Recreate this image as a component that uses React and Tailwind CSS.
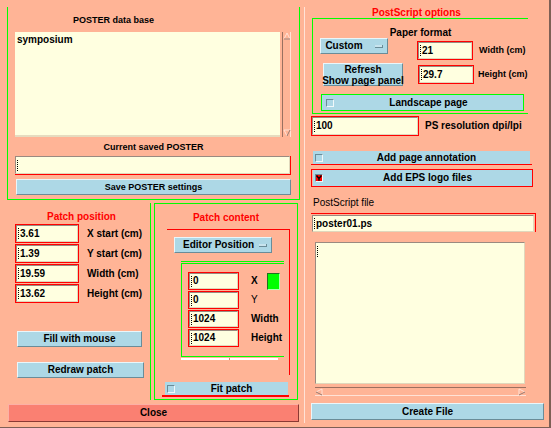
import React from 'react';

// small dotted insertion cursor shown in Tk entries
function Cursor() {
  return <span className="inline-block w-px h-[11px] border-l border-dotted border-black mr-px" />;
}

function Entry({ value, className = '' }) {
  return (
    <div className={`flex bg-[#ffffe0] border border-[#ff0000] ${className}`}>
      <div className="flex flex-1 items-center pl-px border border-t-[#9a8a80] border-l-[#9a8a80] border-b-[#e0d8bc] border-r-[#e0d8bc]">
        <Cursor />
        <span>{value}</span>
      </div>
    </div>
  );
}

function Btn({ children, className = '' }) {
  return (
    <div
      className={`flex items-center justify-center bg-[#add8e6] border border-t-[#eaf6fa] border-l-[#eaf6fa] border-b-[#6a8c98] border-r-[#6a8c98] ${className}`}
    >
      {children}
    </div>
  );
}

function Check({ on = false }) {
  return (
    <span
      className={`flex items-center justify-center w-[8px] h-[8px] border border-t-[#6a8c98] border-l-[#6a8c98] border-b-[#f0f8fa] border-r-[#f0f8fa] ${on ? 'bg-[#ff0000]' : 'bg-[#add8e6]'}`}
    >
      {on && (
        <svg width="6" height="6" viewBox="0 0 6 6">
          <path d="M0.5 0.5 L3 3.5 L5.5 0.5 M3 3.5 V5.8" stroke="#000" strokeWidth="1.4" fill="none" />
        </svg>
      )}
    </span>
  );
}

function MenuMark() {
  return <span className="block w-[8px] h-[3px] bg-[#c8e4ee] border-b border-r border-[#6a8c98]" />;
}

function VScroll() {
  return (
    <div className="w-[9px] h-[105px] flex flex-col justify-between border-l border-l-[#9a7060] border-r border-r-[#ffe2d6]">
      <svg width="8" height="8" viewBox="0 0 8 8">
        <path d="M4 1 L7 7 L1 7 Z" fill="none" stroke="#ffe2d6" />
        <path d="M1 7 H7" stroke="#9a7060" />
      </svg>
      <svg width="8" height="8" viewBox="0 0 8 8">
        <path d="M1 1 H7 L4 7 Z" fill="none" stroke="#ffe2d6" />
        <path d="M4 7 L7 1" stroke="#9a7060" />
      </svg>
    </div>
  );
}

function HScroll() {
  return (
    <div className="w-[211px] h-[9px] flex justify-between border-t border-t-[#9a7060] border-b border-b-[#ffe2d6]">
      <svg width="8" height="8" viewBox="0 0 8 8">
        <path d="M1 4 L7 1 L7 7 Z" fill="none" stroke="#ffe2d6" />
        <path d="M1 4 L7 7" stroke="#9a7060" />
      </svg>
      <svg width="8" height="8" viewBox="0 0 8 8">
        <path d="M7 4 L1 1 L1 7 Z" fill="none" stroke="#ffe2d6" />
        <path d="M1 7 L7 4" stroke="#9a7060" />
      </svg>
    </div>
  );
}

function PosterBase() {
  return (
    <div className="ml-[7px] mt-[7px] w-[293px] h-[193px] flex flex-col border-x border-b border-[#00ff00]">
      <div className="mt-[8px] ml-[65px] h-[11px] leading-[11px] text-[9px]">POSTER data base</div>
      <div className="mt-[6px] ml-[7px] flex gap-[2px]">
        <div className="w-[265px] h-[105px] bg-[#ffffe0] border-b-2 border-[#e6dcc0] pl-[2px] pt-[2px] leading-[11px]">
          symposium
        </div>
        <VScroll />
      </div>
      <div className="mt-[5px] h-[11px] leading-[11px] text-center text-[9px]">Current saved POSTER</div>
      <div className="mt-[3px] ml-[7px] w-[276px] h-[19px] flex bg-[#ffffe0] border-b border-r border-[#ff0000]">
        <div className="flex flex-1 items-center pl-px border border-t-[#9a8a80] border-l-[#9a8a80] border-b-[#e0d8bc] border-r-[#e0d8bc]">
          <Cursor />
        </div>
      </div>
      <Btn className="mt-[4px] ml-[8px] w-[275px] h-[16px] text-[9px]">Save POSTER settings</Btn>
    </div>
  );
}

function PatchPosition() {
  const rows = [
    ['3.61', 'X start (cm)'],
    ['1.39', 'Y start (cm)'],
    ['19.59', 'Width (cm)'],
    ['13.62', 'Height (cm)'],
  ];
  return (
    <div className="w-[150px] flex flex-col">
      <div className="mt-[11px] ml-[47px] h-[11px] leading-[11px] text-[#ff0000]">Patch position</div>
      <div className="mt-[2px] flex flex-col gap-px">
        {rows.map(([v, l]) => (
          <div key={l} className="flex items-center">
            <Entry value={v} className="ml-[15px] w-[64px] h-[19px]" />
            <span className="ml-[8px]">{l}</span>
          </div>
        ))}
      </div>
      <Btn className="mt-[28px] ml-[17px] w-[125px] h-[16px]">Fill with mouse</Btn>
      <Btn className="mt-[15px] ml-[17px] w-[127px] h-[16px]">Redraw patch</Btn>
    </div>
  );
}

function PatchContent() {
  const rows = [
    ['0', 'X'],
    ['0', 'Y'],
    ['1024', 'Width'],
    ['1024', 'Height'],
  ];
  return (
    <div className="mt-[3px] ml-[3px] w-[144px] h-[197px] flex flex-col border border-[#00ff00]">
      <div className="mt-[8px] h-[11px] leading-[11px] text-center text-[#ff0000]">Patch content</div>
      <div className="mt-[6px] ml-[12px] w-[123px] h-[146px] flex flex-col border-t border-r border-[#ff0000]">
        <Btn className="mt-[7px] ml-[7px] w-[98px] h-[16px] justify-start">
          <span className="ml-[8px]">Editor Position</span>
          <span className="ml-[5px]">
            <MenuMark />
          </span>
        </Btn>
        <div className="mt-[8px] ml-[14px] w-[103px] flex flex-col">
          <div className="h-[3px] border-y border-[#00ff00]" />
          <div className="h-[93px] border-l border-b border-[#00ff00] flex flex-col pt-[8px] gap-px">
            {rows.map(([v, l], i) => (
              <div key={l} className="flex items-center">
                <Entry value={v} className="ml-[6px] w-[51px] h-[18px]" />
                <span className={`ml-[12px] w-[16px] ${l === 'Y' ? 'font-normal' : ''}`}>{l}</span>
                {i === 0 && (
                  <span className="w-[13px] h-[17px] bg-[#00ff00] border border-t-[#207020] border-l-[#207020] border-b-[#b0ffb0] border-r-[#b0ffb0]" />
                )}
              </div>
            ))}
          </div>
          <div className="mt-px w-[97px] h-[2px] bg-[#ffffff] flex justify-center">
            <span className="w-px h-[2px] bg-[#c09080]" />
          </div>
        </div>
      </div>
      <div className="mt-[7px] ml-[7px] w-[127px] border-b-2 border-[#ff0000]">
        <div className="ml-[3px] w-[123px] h-[13px] bg-[#add8e6] flex items-center">
          <span className="ml-[2px]">
            <Check />
          </span>
          <span className="flex-1 text-center">Fit patch</span>
        </div>
      </div>
    </div>
  );
}

function LeftColumn() {
  return (
    <div className="w-[304px] flex flex-col">
      <PosterBase />
      <div className="flex h-[200px]">
        <PatchPosition />
        <div className="mt-[3px] w-px h-[197px] bg-[#00ff00]" />
        <PatchContent />
      </div>
      <div className="mt-[4px] ml-[8px] w-[291px] h-[18px] flex items-center justify-center bg-[#fa8072] border border-t-[#fcb0a6] border-l-[#fcb0a6] border-b-[#8a3a34] border-r-[#8a3a34]">
        Close
      </div>
    </div>
  );
}

function RightColumn() {
  return (
    <div className="w-[244px] flex flex-col">
      <div className="mt-[7px] ml-[67px] h-[11px] leading-[11px] text-[#ff0000]">PostScript options</div>
      <div className="ml-[7px] w-[216px] h-[96px] flex flex-col overflow-hidden border-l border-t border-b border-[#00ff00]">
        <div className="mt-[8px] h-[11px] leading-[11px] text-center">Paper format</div>
        <div className="flex items-start whitespace-nowrap">
          <Btn className="ml-[7px] w-[68px] h-[16px] shrink-0">
            <span>Custom</span>
            <span className="ml-[12px]">
              <MenuMark />
            </span>
          </Btn>
          <Entry value="21" className="mt-[3px] ml-[29px] w-[56px] h-[19px] shrink-0" />
          <span className="mt-[8px] ml-[6px] text-[9px]">Width (cm)</span>
        </div>
        <div className="mt-[3px] flex items-start whitespace-nowrap">
          <Btn className="ml-[10px] w-[80px] h-[23px] shrink-0 flex-col leading-[11px]">
            <span>Refresh</span>
            <span>Show page panel</span>
          </Btn>
          <Entry value="29.7" className="mt-[2px] ml-[15px] w-[56px] h-[19px] shrink-0" />
          <span className="mt-[7px] ml-[4px] text-[9px]">Height (cm)</span>
        </div>
        <div className="mt-[8px] ml-[8px] w-[203px] h-[17px] flex items-center bg-[#add8e6] border border-[#00ff00]">
          <span className="ml-[4px]">
            <Check />
          </span>
          <span className="flex-1 text-center">Landscape page</span>
        </div>
      </div>
      <div className="mt-[2px] flex items-center whitespace-nowrap">
        <Entry value="100" className="ml-[6px] w-[108px] h-[20px] shrink-0" />
        <span className="ml-[6px]">PS resolution dpi/lpi</span>
      </div>
      <div className="mt-[15px] ml-[6px] w-[221px] border-b border-[#ff0000]">
        <div className="ml-[2px] w-[217px] h-[13px] flex items-center bg-[#add8e6]">
          <span className="ml-[2px]">
            <Check />
          </span>
          <span className="flex-1 text-center">Add page annotation</span>
        </div>
      </div>
      <div className="mt-[4px] ml-[6px] w-[222px] h-[18px] border border-[#ff0000] pl-px">
        <div className="h-full flex items-center bg-[#add8e6]">
          <span className="ml-[2px]">
            <Check on />
          </span>
          <span className="flex-1 text-center">Add EPS logo files</span>
        </div>
      </div>
      <div className="mt-[10px] ml-[8px] h-[11px] leading-[11px] font-normal">PostScript file</div>
      <div className="mt-[5px] ml-[6px] w-[225px] border-t border-r border-[#ff0000] pt-px pl-px pr-px">
        <div className="h-[17px] flex items-center pl-px bg-[#ffffe0] border border-t-[#9a8a80] border-l-[#9a8a80] border-b-[#e0d8bc] border-r-[#e0d8bc]">
          <Cursor />
          <span>poster01.ps</span>
        </div>
      </div>
      <div className="mt-[10px] ml-[10px] w-[210px] h-[142px] bg-[#ffffe0] border border-t-[#9a8a80] border-l-[#9a8a80] border-b-[#e0d8bc] border-r-[#e0d8bc] pl-px pt-[3px]">
        <Cursor />
      </div>
      <div className="mt-[3px] ml-[10px]">
        <HScroll />
      </div>
      <Btn className="mt-[7px] ml-[6px] w-[233px] h-[17px]">Create File</Btn>
    </div>
  );
}

export default function App() {
  return (
    <div className="w-[551px] h-[428px] overflow-hidden bg-[#ffb496] font-['Liberation_Sans',Arial,sans-serif] text-[10px] font-bold text-black leading-none select-none">
      <div className="flex h-[428px] border-b border-[#7d5f55]">
        <LeftColumn />
        <div className="mt-[7px] mb-[4px] w-px bg-[#ffe2d6]" />
        <RightColumn />
        <div className="w-[2px] bg-[#7d5f55]" />
      </div>
    </div>
  );
}
